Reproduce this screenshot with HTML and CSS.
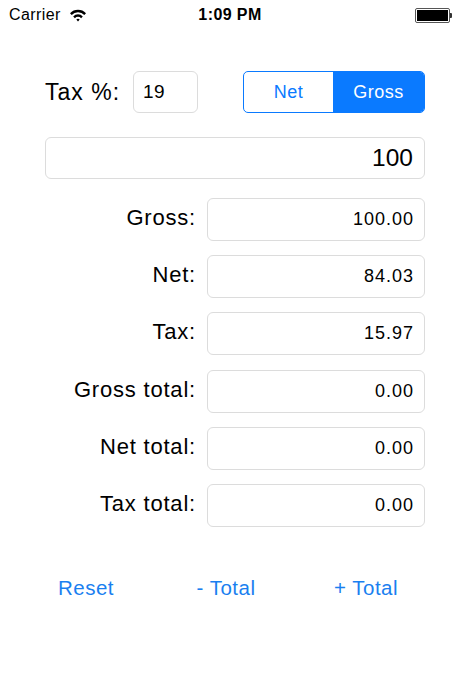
FILE: index.html
```html
<!DOCTYPE html>
<html>
<head>
<meta charset="utf-8">
<link rel="stylesheet" href="styles.css">
</head>
<body>
<div class="screen">
  <div class="status">
    <div class="status-left">
      <span class="carrier">Carrier</span>
      <svg class="wifi" width="18" height="14" viewBox="0 0 18 14">
        <path d="M1 5.2 A11 11 0 0 1 17 5.2 L15.3 7 A8.6 8.6 0 0 0 2.7 7 Z" fill="#000"/>
        <path d="M4.2 8.5 A6.4 6.4 0 0 1 13.8 8.5 L12.1 10.2 A4 4 0 0 0 5.9 10.2 Z" fill="#000"/>
        <path d="M7.3 11.6 A2.4 2.4 0 0 1 10.7 11.6 L9 13.4 Z" fill="#000"/>
      </svg>
    </div>
    <div class="time">1:09 PM</div>
    <div class="status-right">
      <div class="battery"><div class="battery-fill"></div></div>
      <div class="battery-nub"></div>
    </div>
  </div>

  <div class="content">
    <div class="top-row">
      <span class="tax-label">Tax %:</span>
      <div class="field tax-field">19</div>
      <div class="segmented">
        <div class="seg">Net</div>
        <div class="seg seg-active">Gross</div>
      </div>
    </div>

    <div class="field main-field">100</div>

    <div class="rows">
      <div class="label">Gross:</div><div class="field value">100.00</div>
      <div class="label">Net:</div><div class="field value">84.03</div>
      <div class="label">Tax:</div><div class="field value">15.97</div>
      <div class="label">Gross total:</div><div class="field value">0.00</div>
      <div class="label">Net total:</div><div class="field value">0.00</div>
      <div class="label">Tax total:</div><div class="field value">0.00</div>
    </div>
  </div>

  <div class="buttons">
    <div class="btn">Reset</div>
    <div class="btn">- Total</div>
    <div class="btn">+ Total</div>
  </div>
</div>
</body>
</html>
```

FILE: styles.css
```css
html, body {
  margin: 0;
  padding: 0;
  background: #fff;
}

body {
  font-family: "Liberation Sans", Arial, sans-serif;
  color: #000;
}

.screen {
  width: 460px;
  height: 690px;
  background: #fff;
}

.status {
  height: 30px;
  display: flex;
  align-items: center;
  justify-content: space-between;
  padding: 0 8px 0 9px;
  position: relative;
  font-size: 16px;
}

.status-left {
  display: flex;
  align-items: center;
  gap: 8px;
}

.carrier {
  letter-spacing: 0.4px;
}

.wifi {
  display: block;
  margin-top: -1px;
}

.time {
  position: absolute;
  left: 0;
  right: 0;
  text-align: center;
  font-weight: bold;
  letter-spacing: 0.4px;
  pointer-events: none;
}

.status-right {
  display: flex;
  align-items: center;
}

.battery {
  width: 31px;
  height: 11px;
  border: 1px solid #555;
  border-radius: 2px;
  padding: 1px;
  box-sizing: content-box;
}

.battery-fill {
  width: 100%;
  height: 100%;
  background: #000;
}

.battery-nub {
  width: 2px;
  height: 5px;
  background: #333;
  border-radius: 0 1px 1px 0;
}

.content {
  padding: 41px 35px 0 45px;
}

.top-row {
  display: flex;
  align-items: center;
  height: 42px;
}

.tax-label {
  font-size: 23px;
  letter-spacing: 1px;
  width: 88px;
}

.field {
  box-sizing: border-box;
  border: 1px solid #dcdcdc;
  border-radius: 6px;
  background: #fff;
  display: flex;
  align-items: center;
}

.tax-field {
  width: 65px;
  height: 42px;
  padding-left: 9px;
  font-size: 19px;
  letter-spacing: 0.5px;
}

.segmented {
  margin-left: auto;
  width: 182px;
  height: 42px;
  box-sizing: border-box;
  border: 1px solid #0a7aff;
  border-radius: 5px;
  display: flex;
  overflow: hidden;
}

.seg {
  flex: 0 0 89px;
  display: flex;
  align-items: center;
  justify-content: center;
  color: #0a7aff;
  font-size: 18px;
  letter-spacing: 0.5px;
}

.seg-active {
  flex: 1;
  background: #0a7aff;
  color: #fff;
}

.main-field {
  margin-top: 24px;
  height: 42px;
  justify-content: flex-end;
  padding-right: 11px;
  font-size: 24.5px;
}

.rows {
  margin-top: 19px;
  display: grid;
  grid-template-columns: 150px 218px;
  column-gap: 12px;
  row-gap: 14.2px;
}

.label {
  font-size: 22px;
  letter-spacing: 0.8px;
  text-align: right;
  display: flex;
  align-items: center;
  justify-content: flex-end;
  margin-top: -3px;
  margin-right: -1px;
}

.value {
  height: 43px;
  justify-content: flex-end;
  padding-right: 10px;
  font-size: 18px;
  letter-spacing: 1px;
}

.buttons {
  margin-top: 46px;
  padding-left: 16px;
  display: grid;
  grid-template-columns: 140px 140px 140px;
  height: 30px;
  align-items: center;
}

.btn {
  text-align: center;
  color: #1a7ff0;
  font-size: 20.5px;
  letter-spacing: 0.5px;
}
```
